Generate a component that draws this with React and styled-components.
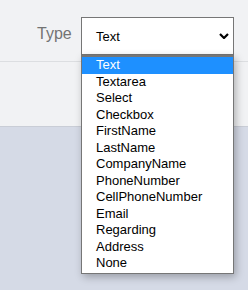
import React from "react";
import styled, { createGlobalStyle } from "styled-components";

const Global = createGlobalStyle`
  html, body { margin: 0; padding: 0; }
  body {
    background: #d5dae6;
    font-family: "Liberation Sans", Arial, sans-serif;
    width: 248px;
    height: 290px;
    overflow: hidden;
  }
`;

const Panel = styled.div`
  background: #f1f2f4;
  height: 126px;
  border-bottom: 1px solid #c9cdd6;
`;

const Row = styled.div`
  display: flex;
  align-items: flex-start;
  gap: 10px;
  padding: 17px 0 6px 37px;
  border-bottom: 1px solid #dcdee1;
`;

const Label = styled.span`
  font-size: 16px;
  line-height: 24px;
  padding-top: 5px;
  color: #737373;
  width: 34px;
`;

const SelectWrap = styled.div`
  position: relative;
  width: 153px;
`;

const SelectBox = styled.div`
  box-sizing: border-box;
  height: 38px;
  border: 1px solid #767676;
  background: #fff;
  display: flex;
  align-items: center;
  justify-content: space-between;
  padding: 0 4px 0 14px;
  font-size: 13px;
  color: #000;
`;

const Chevron = () => (
  <svg width="10" height="6" viewBox="0 0 10 6" style={{ display: "block" }}>
    <polyline points="1,1 5,5 9,1" fill="none" stroke="#000" strokeWidth="2.2" strokeLinecap="butt" />
  </svg>
);

const List = styled.ul`
  position: absolute;
  top: 100%;
  left: 0;
  width: 153px;
  box-sizing: border-box;
  margin: 0;
  padding: 0 0 1px;
  list-style: none;
  background: #fff;
  border: 1px solid #767676;
  border-top-width: 2px;
  box-shadow: 2px 3px 8px rgba(0, 0, 0, 0.28);
  z-index: 2;
`;

const Item = styled.li`
  height: 16.5px;
  line-height: 16.5px;
  padding-left: 14px;
  font-size: 13px;
  white-space: nowrap;
  color: ${(p) => (p.$active ? "#fff" : "#000")};
  background: ${(p) => (p.$active ? "#1e90ff" : "transparent")};
`;

const options = [
  "Text",
  "Textarea",
  "Select",
  "Checkbox",
  "FirstName",
  "LastName",
  "CompanyName",
  "PhoneNumber",
  "CellPhoneNumber",
  "Email",
  "Regarding",
  "Address",
  "None",
];

export default function App() {
  return (
    <>
      <Global />
      <Panel>
        <Row>
          <Label>Type</Label>
          <SelectWrap>
            <SelectBox>
              <span>Text</span>
              <Chevron />
            </SelectBox>
            <List>
              {options.map((o, i) => (
                <Item key={o} $active={i === 0}>
                  {o}
                </Item>
              ))}
            </List>
          </SelectWrap>
        </Row>
      </Panel>
    </>
  );
}
